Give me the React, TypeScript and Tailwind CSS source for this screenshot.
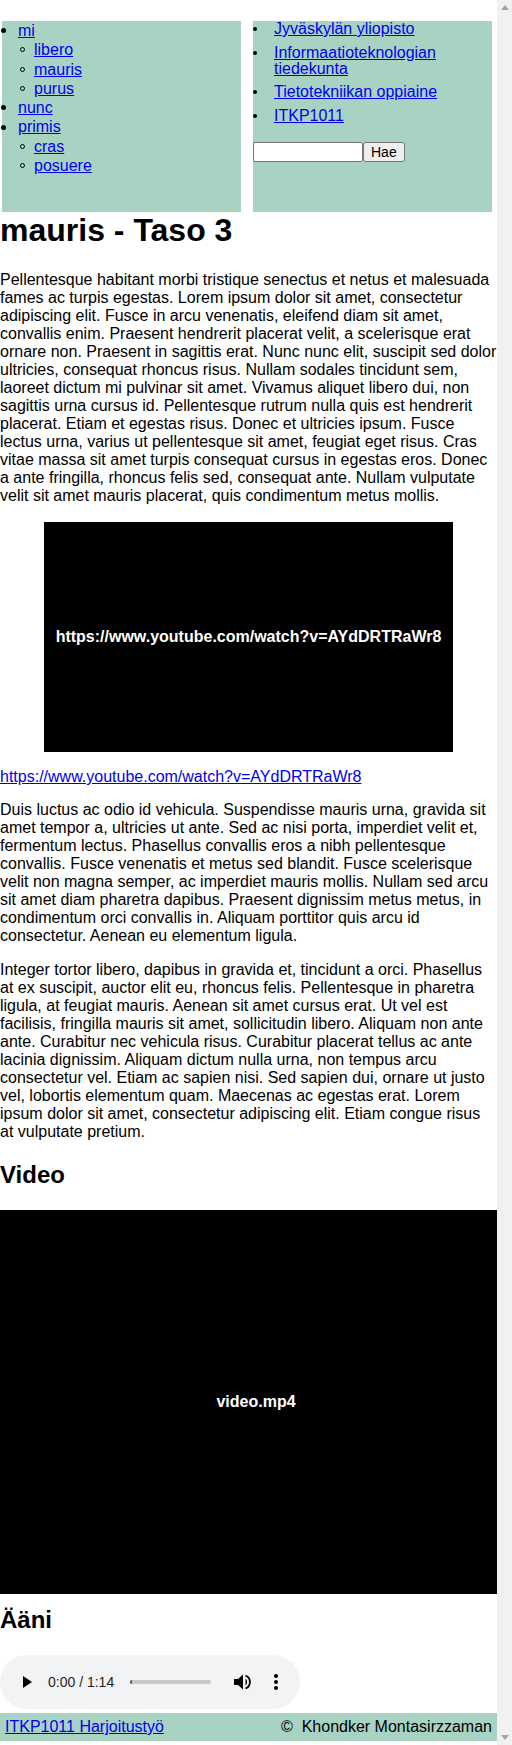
const green = "bg-[#a8d3c3]";

const leftNav = [
  { label: "mi", sub: ["libero", "mauris", "purus"] },
  { label: "nunc", sub: [] },
  { label: "primis", sub: ["cras", "posuere"] },
];

const rightNav = [
  "Jyväskylän yliopisto",
  "Informaatioteknologian tiedekunta",
  "Tietotekniikan oppiaine",
  "ITKP1011",
];

const p1 =
  "Pellentesque habitant morbi tristique senectus et netus et malesuada fames ac turpis egestas. Lorem ipsum dolor sit amet, consectetur adipiscing elit. Fusce in arcu venenatis, eleifend diam sit amet, convallis enim. Praesent hendrerit placerat velit, a scelerisque erat ornare non. Praesent in sagittis erat. Nunc nunc elit, suscipit sed dolor ultricies, consequat rhoncus risus. Nullam sodales tincidunt sem, laoreet dictum mi pulvinar sit amet. Vivamus aliquet libero dui, non sagittis urna cursus id. Pellentesque rutrum nulla quis est hendrerit placerat. Etiam et egestas risus. Donec et ultricies ipsum. Fusce lectus urna, varius ut pellentesque sit amet, feugiat eget risus. Cras vitae massa sit amet turpis consequat cursus in egestas eros. Donec a ante fringilla, rhoncus felis sed, consequat ante. Nullam vulputate velit sit amet mauris placerat, quis condimentum metus mollis.";

const p2 =
  "Duis luctus ac odio id vehicula. Suspendisse mauris urna, gravida sit amet tempor a, ultricies ut ante. Sed ac nisi porta, imperdiet velit et, fermentum lectus. Phasellus convallis eros a nibh pellentesque convallis. Fusce venenatis et metus sed blandit. Fusce scelerisque velit non magna semper, ac imperdiet mauris mollis. Nullam sed arcu sit amet diam pharetra dapibus. Praesent dignissim metus metus, in condimentum orci convallis in. Aliquam porttitor quis arcu id consectetur. Aenean eu elementum ligula.";

const p3 =
  "Integer tortor libero, dapibus in gravida et, tincidunt a orci. Phasellus at ex suscipit, auctor elit eu, rhoncus felis. Pellentesque in pharetra ligula, at feugiat mauris. Aenean sit amet cursus erat. Ut vel est facilisis, fringilla mauris sit amet, sollicitudin libero. Aliquam non ante ante. Curabitur nec vehicula risus. Curabitur placerat tellus ac ante lacinia dignissim. Aliquam dictum nulla urna, non tempus arcu consectetur vel. Etiam ac sapien nisi. Sed sapien dui, ornare ut justo vel, lobortis elementum quam. Maecenas ac egestas erat. Lorem ipsum dolor sit amet, consectetur adipiscing elit. Etiam congue risus at vulputate pretium.";

const yt = "https://www.youtube.com/watch?v=AYdDRTRaWr8";

function Link({ children }: { children: React.ReactNode }) {
  return (
    <a href="#" className="text-[#0000ee] underline">
      {children}
    </a>
  );
}

function AudioPlayer() {
  return (
    <div className="flex items-center w-[300px] h-[54px] rounded-full bg-[#f1f3f4] pl-[23px] text-[#1f1f1f]">
      <svg width="9" height="12" viewBox="0 0 9 12">
        <path d="M0 0 L9 6 L0 12 Z" fill="#000" />
      </svg>
      <span className="ml-[16px] text-[14px] leading-none">0:00 / 1:14</span>
      <div className="ml-[16px] w-[81px] h-[4px] rounded-full bg-[#c8c9ca] flex">
        <div className="w-[2px] h-[4px] rounded-l-full bg-[#555]" />
      </div>
      <svg className="ml-[23px]" width="18" height="16" viewBox="0 0 18 16">
        <path d="M0 5 H4 L9 0.5 V15.5 L4 11 H0 Z" fill="#000" />
        <path d="M11.5 4.5 A4.5 4.5 0 0 1 11.5 11.5 Z" fill="#000" />
        <path d="M11.5 1.5 A7 7 0 0 1 11.5 14.5" fill="none" stroke="#000" strokeWidth="1.8" />
      </svg>
      <svg className="ml-[22px]" width="4" height="16" viewBox="0 0 4 16">
        <circle cx="2" cy="2" r="2" fill="#000" />
        <circle cx="2" cy="8" r="2" fill="#000" />
        <circle cx="2" cy="14" r="2" fill="#000" />
      </svg>
    </div>
  );
}

export default function App() {
  return (
    <div className="flex bg-white text-black font-['Liberation_Sans',Arial,sans-serif] text-[16px]">
      <main className="w-[497px] pt-[21px] pb-[4px]">
        {/* ylaosan navigaatio */}
        <div className="flex pl-[2px] gap-[12px]">
          <nav className={`w-[239px] h-[191px] ${green}`}>
            <ul className="leading-[19.3px]">
              {leftNav.map((item) => (
                <li key={item.label}>
                  <div className="flex items-center">
                    <span className="w-[16px] flex">
                      <span className="w-[5px] h-[5px] -ml-[1px] rounded-full bg-black" />
                    </span>
                    <Link>{item.label}</Link>
                  </div>
                  {item.sub.length > 0 && (
                    <ul className="pl-[16px]">
                      {item.sub.map((s) => (
                        <li key={s} className="flex items-center">
                          <span className="w-[16px] flex">
                            <span className="w-[5px] h-[5px] ml-[2px] rounded-full border border-black" />
                          </span>
                          <Link>{s}</Link>
                        </li>
                      ))}
                    </ul>
                  )}
                </li>
              ))}
            </ul>
          </nav>
          <div className={`w-[239px] h-[191px] ${green}`}>
            <ul className="flex flex-col gap-[7.7px] leading-4">
              {rightNav.map((item) => (
                <li key={item} className="flex items-start">
                  <span className="w-[21px] h-4 flex items-center shrink-0">
                    <span className="w-[4px] h-[4px] rounded-full bg-black" />
                  </span>
                  <Link>{item}</Link>
                </li>
              ))}
            </ul>
            <form className="flex mt-[18px]">
              <input
                type="text"
                className="w-[110px] h-[20px] bg-white border border-[#767676] rounded-[2px] px-1 text-[13px]"
              />
              <button
                type="button"
                className="h-[20px] px-[7px] bg-[#efefef] border border-[#767676] rounded-[3px] text-[14px] leading-none"
              >
                Hae
              </button>
            </form>
          </div>
        </div>

        <h1 className="text-[32px] leading-[37px] font-bold">mauris - Taso 3</h1>

        <p className="mt-[22px] leading-[18px]">{p1}</p>

        <div className="mt-[17px] mx-auto w-[409px] h-[230px] bg-black flex items-center justify-center">
          <span className="text-white font-bold">{yt}</span>
        </div>

        <p className="mt-[16px] leading-[18px]">
          <Link>{yt}</Link>
        </p>

        <p className="mt-[15px] leading-[18px]">{p2}</p>
        <p className="mt-[16px] leading-[18px]">{p3}</p>

        <h2 className="mt-[20px] text-[24px] leading-[28px] font-bold">Video</h2>
        <div className="mt-[21px] h-[384px] bg-black flex items-center justify-center pl-[15px]">
          <span className="text-white font-bold">video.mp4</span>
        </div>

        <h2 className="mt-[12px] text-[24px] leading-[28px] font-bold">Ääni</h2>
        <div className="mt-[21px]">
          <AudioPlayer />
        </div>

        <footer className={`mt-[4px] h-[28px] px-[5px] flex items-center justify-between ${green}`}>
          <Link>ITKP1011 Harjoitustyö</Link>
          <span>©{"\u00a0"} Khondker Montasirzzaman</span>
        </footer>
      </main>

      {/* selaimen vierityspalkki */}
      <aside className="w-[15px] bg-[#f1f1f1] flex flex-col justify-between items-center py-[5px]">
        <svg width="8" height="5" viewBox="0 0 8 5">
          <path d="M4 0 L8 5 L0 5 Z" fill="#a3a3a3" />
        </svg>
        <svg width="8" height="5" viewBox="0 0 8 5">
          <path d="M0 0 L8 0 L4 5 Z" fill="#a3a3a3" />
        </svg>
      </aside>
    </div>
  );
}
